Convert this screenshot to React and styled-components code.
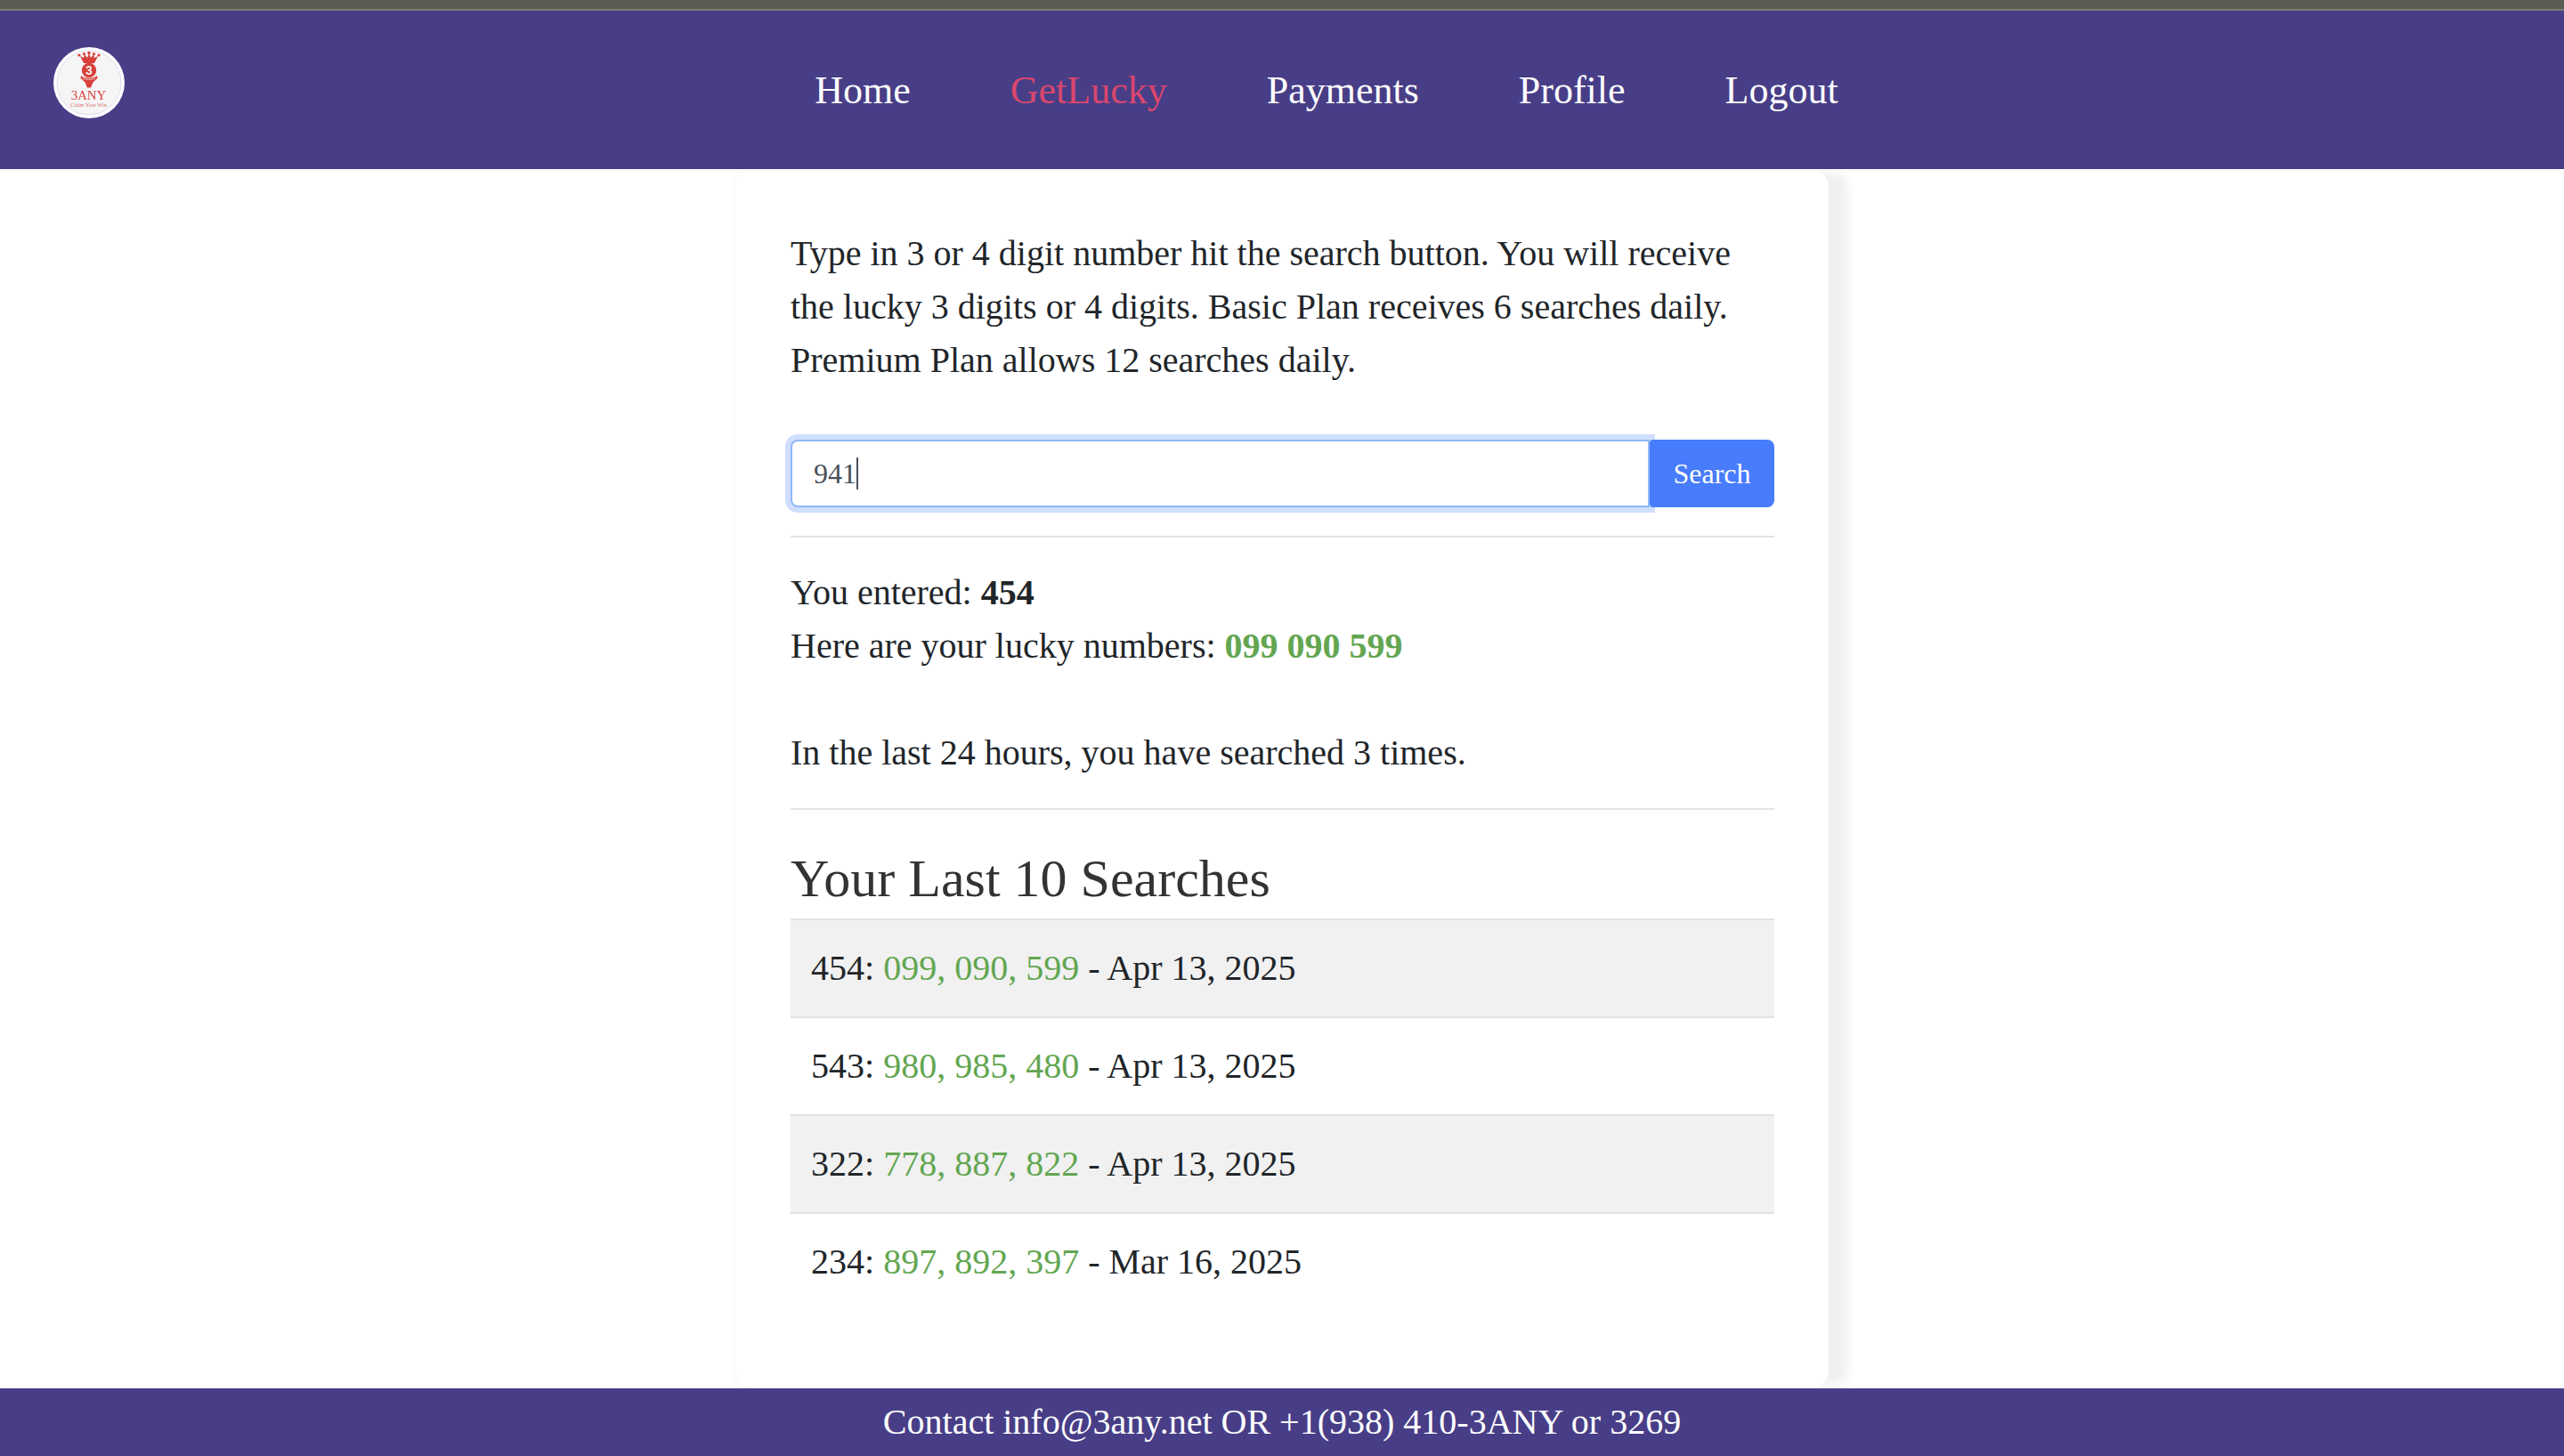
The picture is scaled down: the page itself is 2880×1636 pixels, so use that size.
import styled, { createGlobalStyle } from "styled-components";

const searches = [
  { entered: "454", lucky: "099, 090, 599", date: "Apr 13, 2025" },
  { entered: "543", lucky: "980, 985, 480", date: "Apr 13, 2025" },
  { entered: "322", lucky: "778, 887, 822", date: "Apr 13, 2025" },
  { entered: "234", lucky: "897, 892, 397", date: "Mar 16, 2025" },
];

const links = ["Home", "GetLucky", "Payments", "Profile", "Logout"];

const Logo = () => (
  <LogoSvg viewBox="0 0 80 80" aria-label="3ANY">
    <circle cx="40" cy="40" r="40" fill="#fff" />
    <circle cx="40" cy="40" r="36" fill="#f5f5f5" stroke="#c9c8e6" strokeWidth="0.6" />
    <g fill="#d8403a">
      <circle cx="29" cy="9" r="1.6" />
      <circle cx="34.5" cy="7.5" r="1.6" />
      <circle cx="40" cy="6.5" r="1.7" />
      <circle cx="45.5" cy="7.5" r="1.6" />
      <circle cx="51" cy="9" r="1.6" />
      <path d="M30 10 L34 12 L35 8 L38 12 L40 7 L42 12 L45 8 L46 12 L50 10 L46 18 L34 18 Z" />
      <circle cx="40" cy="26" r="8.2" />
      <path d="M31 32 C34 35.5 46 35.5 49 32 L49.5 35 C47 37 46 38 44.5 39.5 L42 45.5 L38 45.5 L35.5 39.5 C34 38 33 37 30.5 35 Z" />
    </g>
    <path d="M33 35.2 C36 36.6 44 36.6 47 35.2" fill="none" stroke="#f5f5f5" strokeWidth="0.7" />
    <LogoDigit x="40" y="31" textAnchor="middle">3</LogoDigit>
    <LogoName x="39.5" y="59" textAnchor="middle">3ANY</LogoName>
    <LogoTag x="39.5" y="66.5" textAnchor="middle">Claim Your Win</LogoTag>
  </LogoSvg>
);

const App = () => {
  return (
    <Page>
      <GlobalStyle />
      <TopStrip />
      <NavBar>
        <Logo />
        <NavLinks>
          {links.map((link) => (
            <NavLink key={link} $active={link === "GetLucky"}>
              {link}
            </NavLink>
          ))}
        </NavLinks>
      </NavBar>
      <Main>
        <Card>
          <Intro>
            Type in 3 or 4 digit number hit the search button. You will receive
            the lucky 3 digits or 4 digits. Basic Plan receives 6 searches daily.
            Premium Plan allows 12 searches daily.
          </Intro>
          <SearchForm>
            <InputBox>
              941
              <Caret />
            </InputBox>
            <SearchButton type="button">Search</SearchButton>
          </SearchForm>
          <Divider />
          <Result>
            You entered: <b>454</b>
            <br />
            Here are your lucky numbers: <Lucky>099 090 599</Lucky>
          </Result>
          <Count>In the last 24 hours, you have searched 3 times.</Count>
          <Divider />
          <Heading>Your Last 10 Searches</Heading>
          <SearchList>
            {searches.map((item, i) => (
              <SearchRow key={item.entered} $striped={i % 2 === 0}>
                {item.entered}: <Numbers>{item.lucky}</Numbers> - {item.date}
              </SearchRow>
            ))}
          </SearchList>
        </Card>
      </Main>
      <Footer>Contact info@3any.net OR +1(938) 410-3ANY or 3269</Footer>
    </Page>
  );
};

export default App;

const GlobalStyle = createGlobalStyle`
  * {
    box-sizing: border-box;
  }
  body {
    margin: 0;
    background: #fff;
    font-family: "Liberation Serif", "Times New Roman", serif;
    color: #212529;
  }
`;

const Page = styled.div`
  display: flex;
  flex-direction: column;
  height: 1636px;
  overflow: hidden;
`;

const TopStrip = styled.div`
  flex: none;
  height: 12px;
  background: #5a5c54;
  border-bottom: 2px solid #7b7d76;
`;

const NavBar = styled.header`
  position: relative;
  z-index: 2;
  flex: none;
  display: flex;
  align-items: center;
  height: 178px;
  padding: 0 40px 0 60px;
  background: #483e87;
`;

const LogoSvg = styled.svg`
  flex: none;
  width: 80px;
  height: 80px;
  margin-top: -16px;
  filter: blur(0.4px);
`;

const LogoDigit = styled.text`
  font-family: "Liberation Sans", sans-serif;
  font-size: 14px;
  font-weight: 700;
  fill: #f5f5f5;
`;

const LogoName = styled.text`
  font-family: "Liberation Serif", serif;
  font-size: 14.8px;
  fill: #d8403a;
`;

const LogoTag = styled.text`
  font-family: "Liberation Serif", serif;
  font-size: 6.25px;
  fill: #d8736e;
`;

const NavLinks = styled.nav`
  flex: 1;
  display: flex;
  justify-content: center;
  gap: 112px;
  margin-top: 2px;
`;

const NavLink = styled.a`
  font-size: 44px;
  line-height: 66px;
  color: ${(props) => (props.$active ? "#d9476d" : "#fff")};
`;

const Main = styled.main`
  flex: 1;
  min-height: 0;
  display: flex;
  justify-content: center;
`;

const Card = styled.section`
  width: 1228px;
  padding: 65px 61px 0 62px;
  background: #fff;
  border-radius: 20px;
  box-shadow: 26px 0 12px -4px #eff1ef, 0 0 8px rgba(0, 0, 0, 0.04);
  font-size: 40px;
  line-height: 60px;
`;

const Intro = styled.p`
  margin: 0 0 59px;
`;

const SearchForm = styled.div`
  display: flex;
  height: 76px;
`;

const InputBox = styled.div`
  flex: 1;
  display: flex;
  align-items: center;
  padding: 0 24px;
  background: #fff;
  border: 2px solid #8fb8f8;
  border-radius: 8px 0 0 8px;
  box-shadow: 0 0 0 6px #cfdefd;
  font-size: 32px;
  color: #495057;
`;

const Caret = styled.span`
  width: 2px;
  height: 36px;
  background: #495057;
`;

const SearchButton = styled.button`
  position: relative;
  flex: none;
  width: 140px;
  border: none;
  border-radius: 4px 8px 8px 4px;
  background: #477cfc;
  color: #fff;
  font-family: inherit;
  font-size: 32px;
`;

const Divider = styled.hr`
  height: 2px;
  margin: 32px 0;
  border: none;
  background: #e3e3e3;
`;

const Result = styled.p`
  margin: 0 0 60px;
`;

const Lucky = styled.b`
  color: #63a651;
`;

const Count = styled.p`
  margin: 0;
`;

const Heading = styled.h2`
  margin: 0;
  font-size: 60px;
  font-weight: 400;
  line-height: 90px;
  color: #333;
`;

const SearchList = styled.ul`
  margin: 0;
  padding: 0;
  list-style: none;
`;

const SearchRow = styled.li`
  height: 110px;
  padding: 0 23px;
  line-height: 108px;
  border-top: 2px solid #dee2e6;
  background: ${(props) => (props.$striped ? "#f1f1f1" : "#fff")};
`;

const Numbers = styled.span`
  color: #63a651;
`;

const Footer = styled.footer`
  position: relative;
  z-index: 2;
  flex: none;
  height: 76px;
  padding-top: 16px;
  background: #483e87;
  color: #fff;
  font-size: 40px;
  line-height: 44px;
  text-align: center;
`;
